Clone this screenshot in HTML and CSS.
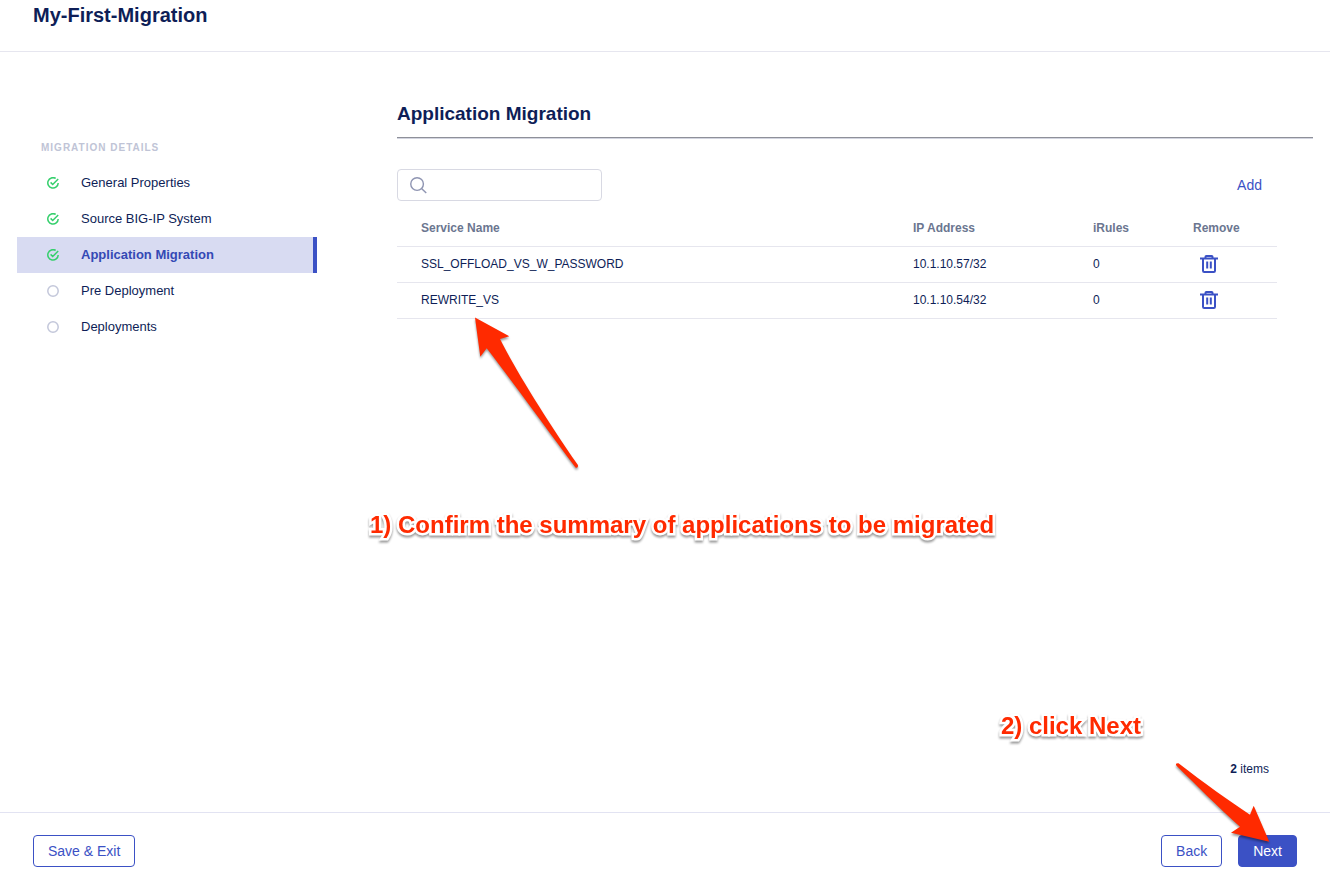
FILE: index.html
```html
<!DOCTYPE html>
<html lang="en">
<head>
<meta charset="utf-8">
<meta name="viewport" content="width=device-width, initial-scale=1">
<title>My-First-Migration</title>
<link rel="stylesheet" href="styles.css">
</head>
<body>
<div class="page">
  <header class="page-header"><h1 class="page-title">My-First-Migration</h1></header>

  <div class="page-body">
    <nav class="steps" aria-labelledby="steps-title">
      <h2 class="steps-title" id="steps-title">MIGRATION DETAILS</h2>
      <ul class="steps-list">
        <li><a class="step" href="#general"><svg class="step-icon done" viewBox="0 0 12 12" aria-hidden="true"><path d="M8.7 1.4A5.2 5.2 0 1 0 11.2 6"/><path d="M3.6 5.4L5.7 7.5L11.2 2"/></svg>General Properties</a></li>
        <li><a class="step" href="#source"><svg class="step-icon done" viewBox="0 0 12 12" aria-hidden="true"><path d="M8.7 1.4A5.2 5.2 0 1 0 11.2 6"/><path d="M3.6 5.4L5.7 7.5L11.2 2"/></svg>Source BIG-IP System</a></li>
        <li><a class="step current" href="#application" aria-current="step"><svg class="step-icon done" viewBox="0 0 12 12" aria-hidden="true"><path d="M8.7 1.4A5.2 5.2 0 1 0 11.2 6"/><path d="M3.6 5.4L5.7 7.5L11.2 2"/></svg>Application Migration</a></li>
        <li><a class="step" href="#pre"><svg class="step-icon" viewBox="0 0 12 12" aria-hidden="true"><circle cx="6" cy="6" r="5.2"/></svg>Pre Deployment</a></li>
        <li><a class="step" href="#deployments"><svg class="step-icon" viewBox="0 0 12 12" aria-hidden="true"><circle cx="6" cy="6" r="5.2"/></svg>Deployments</a></li>
      </ul>
    </nav>

    <main class="content">
      <h2 class="content-title">Application Migration</h2>
      <div class="content-inner">
        <div class="toolbar">
          <label class="search">
            <svg class="search-icon" viewBox="0 0 18 18" aria-hidden="true"><circle cx="7.5" cy="7.5" r="6.7"/><path d="M12.2 12.2L17.2 17"/></svg>
            <input class="search-input" type="search" aria-label="Search applications">
          </label>
          <button class="link-button" type="button">Add</button>
        </div>
        <table class="services">
          <thead>
            <tr><th scope="col">Service Name</th><th class="col-ip" scope="col">IP Address</th><th class="col-rules" scope="col">iRules</th><th class="col-remove" scope="col">Remove</th></tr>
          </thead>
          <tbody>
            <tr><td>SSL_OFFLOAD_VS_W_PASSWORD</td><td>10.1.10.57/32</td><td>0</td><td><button class="remove" type="button" aria-label="Remove SSL_OFFLOAD_VS_W_PASSWORD"><svg class="trash" viewBox="0 0 18 18" aria-hidden="true"><path d="M0 3.5H18M5.5 3V1.8Q5.5 1 6.3 1H11.7Q12.5 1 12.5 1.8V3M3 3.5V15.8Q3 17 4.2 17H13.8Q15 17 15 15.8V3.5"/><path d="M7.2 6.5V13.5M10.8 6.5V13.5"/></svg></button></td></tr>
            <tr><td>REWRITE_VS</td><td>10.1.10.54/32</td><td>0</td><td><button class="remove" type="button" aria-label="Remove REWRITE_VS"><svg class="trash" viewBox="0 0 18 18" aria-hidden="true"><path d="M0 3.5H18M5.5 3V1.8Q5.5 1 6.3 1H11.7Q12.5 1 12.5 1.8V3M3 3.5V15.8Q3 17 4.2 17H13.8Q15 17 15 15.8V3.5"/><path d="M7.2 6.5V13.5M10.8 6.5V13.5"/></svg></button></td></tr>
          </tbody>
        </table>
        <p class="count"><strong>2</strong> items</p>
      </div>
    </main>
  </div>

  <footer class="page-footer">
    <button class="button" type="button">Save &amp; Exit</button>
    <div class="footer-actions">
      <button class="button" type="button">Back</button>
      <button class="button primary" type="button">Next</button>
    </div>
  </footer>

  <svg class="arrow arrow-list" viewBox="0 0 110 160" aria-hidden="true"><path d="M5 7.5L39.3 26.3L30 29C44 57 72 103 107.9 155Q108.5 158.5 105.5 157.5C76 118 42 71 16.7 38.3L10.3 46.7Z"/></svg>
  <p class="note note-list">1) Confirm the summary of applications to be migrated</p>
  <p class="note note-next">2) click Next</p>
  <svg class="arrow arrow-next" viewBox="0 0 110 90" aria-hidden="true"><path d="M99.3 81.7L83.7 45.7L80 54.7C59 41 34 23 8.5 3.3Q5 3 6.3 5.5C25 24 48 47 70 66.7L61 72.7Z"/></svg>
</div>
</body>
</html>
```
FILE: styles.css
```css
* { box-sizing: border-box; }

body {
  margin: 0;
  background: #fff;
  color: #0e1e57;
  font-family: "Liberation Sans", Arial, sans-serif;
  font-size: 12px;
  line-height: 16px;
}

h1, h2, p, ul { margin: 0; padding: 0; }
button, input { font: inherit; color: inherit; }
button { cursor: pointer; }

.page {
  position: relative;
  display: flex;
  flex-direction: column;
  min-height: 100vh;
}

.page-header {
  padding: 3px 33px 24px;
  border-bottom: 1px solid #e6e6ef;
}
.page-title { font-size: 20px; line-height: 24px; }

.page-body {
  flex: 1;
  display: flex;
  gap: 80px;
  padding: 48px 17px 35px;
}

.steps { flex: 0 0 300px; padding-top: 40px; }
.steps-title {
  padding-left: 24px;
  margin-bottom: 9px;
  color: #c0c4d6;
  font-size: 10px;
  line-height: 16px;
  letter-spacing: 1px;
}
.steps-list { list-style: none; }
.step {
  display: flex;
  align-items: center;
  gap: 22px;
  height: 36px;
  padding-left: 30px;
  border-right: 4px solid transparent;
  color: inherit;
  font-size: 13px;
  text-decoration: none;
}
.step.current {
  background: #d8dbf2;
  border-color: #3b51c5;
  color: #3449b5;
  font-weight: bold;
}
.step-icon {
  width: 12px;
  height: 12px;
  fill: none;
  stroke: #c3c7da;
  stroke-width: 1.5;
}
.step-icon.done { stroke: #35cf6c; }

.content { flex: 1; display: flex; flex-direction: column; min-width: 0; }
.content-title {
  padding: 2px 0 11px;
  border-bottom: 1px solid #8e9099;
  box-shadow: 0 1px 0 #d3d5e0;
  font-size: 19px;
  line-height: 24px;
}
.content-inner {
  flex: 1;
  display: flex;
  flex-direction: column;
  padding: 31px 36px 0 0;
}

.toolbar {
  display: flex;
  align-items: center;
  justify-content: space-between;
  padding-right: 15px;
}
.search {
  display: flex;
  align-items: center;
  gap: 8px;
  width: 205px;
  height: 32px;
  padding: 0 12px;
  border: 1px solid #d8d9e3;
  border-radius: 4px;
}
.search-icon { flex: none; width: 17px; height: 17px; fill: none; stroke: #8f95b2; stroke-width: 1.5; }
.search-input { flex: 1; min-width: 0; padding: 0; border: 0; outline: 0; background: none; }
.link-button { padding: 0; border: 0; background: none; color: #3b51c5; font-size: 14px; }

.services { width: 100%; margin-top: 10px; border-collapse: collapse; table-layout: fixed; }
.services th, .services td {
  height: 36px;
  padding: 0 0 0 24px;
  border-bottom: 1px solid #e6e6ee;
  text-align: left;
}
.services th { height: 35px; color: #6b7690; }
.col-ip { width: 180px; }
.col-rules { width: 100px; }
.col-remove { width: 108px; }
.remove { display: block; padding: 0 7px; border: 0; background: none; }
.trash { display: block; width: 18px; height: 18px; fill: none; stroke: #3b51c5; stroke-width: 2; }

.count { margin-top: auto; padding-right: 8px; text-align: right; }

.page-footer {
  display: flex;
  justify-content: space-between;
  padding: 22px 33px 12px;
  border-top: 1px solid #e2e3f2;
}
.footer-actions { display: flex; gap: 16px; }
.button {
  height: 32px;
  padding: 0 14px;
  border: 1px solid #3b51c5;
  border-radius: 4px;
  background: #fff;
  color: #3b51c5;
  font-size: 14px;
}
.button.primary { background: #3b51c5; color: #fff; }

/* Walkthrough callouts drawn over the page */
.note {
  position: absolute;
  color: #ff2a00;
  font-size: 24px;
  font-weight: bold;
  line-height: 28px;
  white-space: nowrap;
  paint-order: stroke fill;
  -webkit-text-stroke: 5px #fff;
  stroke-linejoin: round;
  filter: drop-shadow(0 2px 1px rgba(0, 0, 0, .4));
}
.note-list { top: 511px; left: 370px; }
.note-next { right: 189px; bottom: 139px; }
.arrow {
  position: absolute;
  fill: #ff2a00;
  pointer-events: none;
  filter: drop-shadow(0 2px 1px rgba(0, 0, 0, .4));
}
.arrow-list { top: 310px; left: 470px; width: 110px; height: 160px; }
.arrow-next { right: 50px; bottom: 29px; width: 110px; height: 90px; }
```
